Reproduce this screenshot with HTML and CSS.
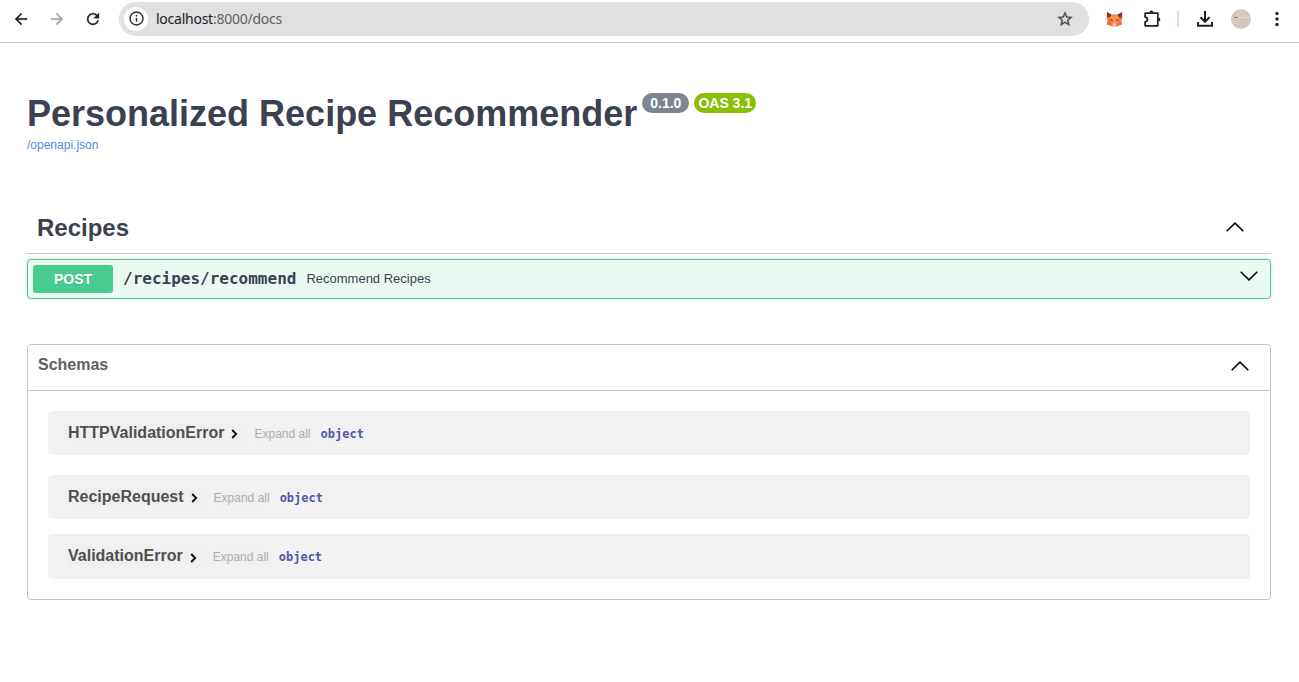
FILE: index.html
```html
<!DOCTYPE html>
<html lang="en">
<head>
<meta charset="utf-8">
<title>Personalized Recipe Recommender</title>
<link rel="stylesheet" href="styles.css">
</head>
<body>
<header class="toolbar">
  <svg class="icon back" viewBox="0 0 24 24"><path d="M20 11H7.83l5.59-5.59L12 4l-8 8 8 8 1.41-1.41L7.83 13H20z"/></svg>
  <svg class="icon forward" viewBox="0 0 24 24"><path d="M12 4l-1.41 1.41L16.17 11H4v2h12.17l-5.58 5.59L12 20l8-8z"/></svg>
  <svg class="icon reload" viewBox="0 0 24 24"><path d="M17.65 6.35A7.96 7.96 0 0 0 12 4a8 8 0 1 0 7.73 10h-2.08A6 6 0 1 1 12 6c1.66 0 3.14.69 4.22 1.78L13 11h7V4z"/></svg>
  <div class="address">
    <span class="site-info"><svg viewBox="0 0 16 16"><circle cx="8" cy="8" r="6.1"/><path d="M8 7.2v3.8M8 4.8v1.4"/></svg></span>
    <span class="url">localhost<span class="url-path">:8000/docs</span></span>
    <svg class="star" viewBox="0 0 24 24"><path d="M22 9.24l-7.19-.62L12 2 9.19 8.63 2 9.24l5.46 4.73L5.82 21 12 17.27 18.18 21l-1.63-7.03zM12 15.4l-3.76 2.27 1-4.28-3.32-2.88 4.38-.38L12 6.1l1.71 4.04 4.38.38-3.32 2.88 1 4.28z"/></svg>
  </div>
  <svg class="fox" viewBox="0 0 16 16">
    <path fill="#f4703a" d="M.3 1L5 3.600h6L15.700 1l.1 6-1 2.500 1 4-3.800 1.300-2 .7H6l-2-.7-3.800-1.300 1-4-1-2.500z"/>
    <path fill="#7a3324" d="M.5 1l4.500 2.800L3.500 6 .8 6.500zM15.500 1L11 3.800 12.500 6l2.700.5z"/>
    <path fill="#ff8f50" d="M4.600 4.500h6.800L13 9l-3 4H6L3 9z"/>
    <path fill="#4a3a40" d="M4 8l2.400 1-.4 1-1.600-.5zM12 8L9.600 9l.4 1 1.600-.5z"/>
    <path fill="#d9ccc2" d="M6.200 12.600h3.600l.3 2.400H5.900z"/>
  </svg>
  <svg class="puzzle" viewBox="0 0 20 20"><path class="line" d="M3.100 4.200h12.700v12.600H3.100v-4c1.500-.2 2.400-1 2.400-2.300S4.600 8.400 3.100 8.200z"/><path d="M7.300 3.600a2.100 2.100 0 0 1 4.200 0zM16.300 8.400a2.100 2.100 0 0 1 0 4.200z"/></svg>
  <span class="divider"></span>
  <svg class="download" viewBox="0 0 18 18"><path d="M9 1v10.500M4.500 7.300L9 11.800l4.500-4.500M2 12v3.800h14V12"/></svg>
  <span class="avatar"><span class="avatar-mark"></span></span>
  <svg class="menu" viewBox="0 0 4 16"><circle cx="2" cy="2.500" r="1.700"/><circle cx="2" cy="8" r="1.700"/><circle cx="2" cy="13.500" r="1.700"/></svg>
</header>

<main class="docs">
  <section class="info">
    <h1 class="title"><span class="title-text">Personalized Recipe Recommender</span><span class="badges"><span class="badge">0.1.0</span><span class="badge badge-oas">OAS 3.1</span></span></h1>
    <a class="spec-link">/openapi.json</a>
  </section>

  <section class="tag">
    <div class="tag-head"><h2 class="tag-name">Recipes</h2><svg class="chevron" viewBox="0 0 18 10"><path d="M.7 9.200L9 1.100l8.300 8.100"/></svg></div>
    <div class="operation">
      <span class="method">POST</span>
      <span class="path">/recipes/recommend</span>
      <span class="summary">Recommend Recipes</span>
      <svg class="chevron" viewBox="0 0 18 10"><path d="M.7.800L9 8.900 17.300.800"/></svg>
    </div>
  </section>

  <section class="schemas">
    <div class="schemas-head"><h3 class="schemas-title">Schemas</h3><svg class="chevron" viewBox="0 0 18 10"><path d="M.7 9.200L9 1.100l8.300 8.100"/></svg></div>
    <div class="schema-list">
      <div class="schema"><span class="schema-name">HTTPValidationError<svg class="arrow" viewBox="0 0 7 10"><path d="M1.200 1l4 4-4 4"/></svg></span><span class="expand">Expand all</span><span class="type">object</span></div>
      <div class="schema"><span class="schema-name">RecipeRequest<svg class="arrow" viewBox="0 0 7 10"><path d="M1.200 1l4 4-4 4"/></svg></span><span class="expand">Expand all</span><span class="type">object</span></div>
      <div class="schema schema-last"><span class="schema-name">ValidationError<svg class="arrow" viewBox="0 0 7 10"><path d="M1.200 1l4 4-4 4"/></svg></span><span class="expand">Expand all</span><span class="type">object</span></div>
    </div>
  </section>
</main>
</body>
</html>
```
FILE: styles.css
```css
* { box-sizing: border-box; }
body { margin: 0; background: #fff; color: #3b4151; font-family: "Liberation Sans", Arial, sans-serif; }
h1, h2, h3 { margin: 0; }
svg { display: block; flex: none; }

.toolbar { display: flex; align-items: center; height: 43px; padding: 0 20px 5px 12px; border-bottom: 1px solid #c9c9cb; }
.icon { width: 18px; height: 18px; fill: #202124; stroke: #202124; stroke-width: .4; }
.forward { margin-left: 18px; fill: #a2a2a4; stroke: #a2a2a4; }
.reload { width: 18px; height: 18px; margin: 0 1px 0 18px; }
.address { display: flex; align-items: center; width: 970px; height: 34px; margin-left: 16px; padding: 0 15px 0 5px; border-radius: 17px; background: #e0e0e0; }
.site-info { display: flex; align-items: center; justify-content: center; width: 24px; height: 24px; border-radius: 50%; background: #fff; }
.site-info svg { width: 17px; height: 17px; fill: none; stroke: #303134; stroke-width: 1.4; }
.url { flex: 1; margin-left: 8px; color: #202124; font: 14px/20px "Noto Sans", sans-serif; letter-spacing: -.25px; }
.url-path { color: #606164; }
.star { width: 18px; height: 18px; fill: #494a4d; stroke: #494a4d; stroke-width: .4; }
.fox { width: 17px; height: 16px; margin-left: 17px; }
.puzzle { width: 20px; height: 20px; margin-left: 19px; fill: #202124; }
.puzzle .line { fill: none; stroke: #202124; stroke-width: 1.7; stroke-linejoin: round; }
.divider { width: 2px; height: 16px; margin-left: 15px; background: #e6d5ff; }
.download { width: 18px; height: 18px; margin-left: 17px; fill: none; stroke: #202124; stroke-width: 2; }
.avatar { display: flex; align-items: center; width: 20px; height: 20px; margin-left: 17px; padding: 0 1px 3px 3px; border-radius: 50%; background: #d2c8bd; }
.avatar-mark { width: 15px; height: 1px; background: linear-gradient(90deg, #8b8580 0 4px, #e4ddd5 4px); }
.menu { width: 4px; height: 16px; margin-left: 24px; fill: #202124; }

.docs { padding: 49px 28px 0 27px; }
.info { height: 112px; }
.title { display: flex; align-items: flex-start; height: 42px; font-size: 36px; line-height: 42px; white-space: nowrap; }
.title-text { padding-top: 1px; }
.badges { display: flex; gap: 5px; margin: 1px 0 0 5px; }
.badge { height: 20px; padding: 0 8px; border-radius: 10px; background: #7d8492; color: #fff; font-size: 14px; line-height: 20px; }
.badge-oas { padding: 0 4px; background: #89bf04; }
.spec-link { display: block; margin-top: 4px; color: #4990e2; font-size: 12px; line-height: 14px; }

.chevron { width: 18px; height: 10px; margin-left: auto; fill: none; stroke: #000; stroke-width: 1.5; }
.tag-head { display: flex; align-items: center; height: 50px; padding: 0 27px 1px 10px; border-bottom: 1px solid #c4c6cb; }
.tag-head .chevron { margin-top: -2px; }
.tag-name { font-size: 24px; line-height: 28px; }
.operation { display: flex; align-items: center; height: 40px; margin-top: 5px; padding: 0 12px 0 5px; border: 1px solid #49cc90; border-radius: 4px; background: #ebf9f3; box-shadow: 0 0 3px rgba(0, 0, 0, .19); }
.method { width: 80px; height: 28px; border-radius: 3px; background: #49cc90; color: #fff; font-size: 14px; font-weight: 700; line-height: 28px; text-align: center; text-shadow: 0 1px 0 rgba(0, 0, 0, .1); }
.path { margin-left: 10px; font: 600 16px/20px "DejaVu Sans Mono", monospace; }
.summary { margin-left: 10px; padding-bottom: 1px; font-size: 13px; line-height: 15px; }
.operation .chevron { margin-bottom: 6px; }

.schemas { height: 256px; margin-top: 45px; border: 1px solid #c4c6cb; border-radius: 4px; }
.schemas-head { display: flex; align-items: center; height: 46px; padding: 0 21px 3px 10px; border-bottom: 1px solid #c4c6cb; }
.schemas-head .chevron { margin-top: -1px; }
.schemas-title { color: #606060; font-size: 16px; line-height: 18px; margin-top: -2px; }
.schema-list { padding: 20px; }
.schema { display: flex; align-items: flex-start; height: 44px; margin-bottom: 20px; padding: 12px 20px; border-radius: 4px; background: #f1f1f1; }
.schema:nth-child(2) { margin-bottom: 15px; }
.schema-last { height: 45px; }
.schema-name { display: flex; align-items: center; height: 20px; padding-right: 10px; background: #efefef; color: #505050; font-size: 16px; font-weight: 700; }
.arrow { width: 7px; height: 10px; margin: 1px -1px 0 7px; fill: none; stroke: #000; stroke-width: 1.8; }
.schema-last .arrow { margin-top: 3px; }
.expand { height: 15px; margin: 4px 0 0 7px; background: #efefef; color: #afaeae; font-size: 12px; line-height: 15px; }
.type { margin: 4px 0 0 10px; color: #5555aa; font: 700 12px/14px "DejaVu Sans Mono", monospace; }
```
